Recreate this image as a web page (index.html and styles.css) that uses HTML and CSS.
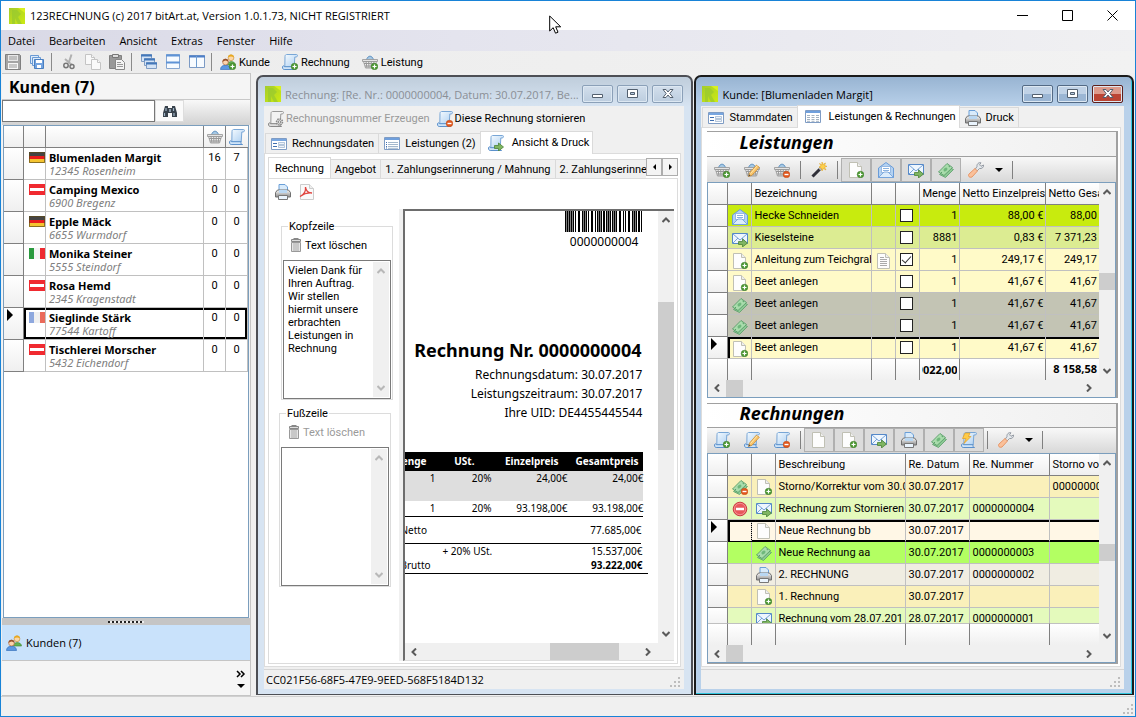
FILE: index.html
```html
<!DOCTYPE html>
<html lang="de">
<head>
<meta charset="utf-8">
<title>123RECHNUNG</title>
<link rel="stylesheet" href="styles.css">
</head>
<body>
<svg class="defs" aria-hidden="true">
<defs>
<linearGradient id="gl" x1="0" y1="0" x2="1" y2="1"><stop offset="0" stop-color="#a4cc2c"/><stop offset="1" stop-color="#cdea12"/></linearGradient>
<linearGradient id="gs" x1="0" y1="0" x2="1" y2="1"><stop offset="0" stop-color="#f4faff"/><stop offset="1" stop-color="#a9cdf0"/></linearGradient>
<linearGradient id="gp" x1="0" y1="0" x2="0" y2="1"><stop offset="0" stop-color="#f8f8f8"/><stop offset="1" stop-color="#8e8e8e"/></linearGradient>
</defs>
<symbol id="logo" viewBox="0 0 16 16"><path d="M0 0h16v16H0z" fill="url(#gl)"/><path d="M3 2h5l4 4-3 3 4 7H9L6 10v6H3z" fill="#97c92f" opacity=".7"/><path d="M9 0h7v5z" fill="#d8f020"/></symbol>
<symbol id="save" viewBox="0 0 16 16"><path d="M.5.5h14l1 1v14H.5z" fill="#a4a4a4" stroke="#808080"/><path d="M3 1h10v6H3z" fill="#e8e8e8"/><path d="M3 9h10v6H3z" fill="#f6f6f6"/><path d="M4 3h8M4 5h8M4 11h8M4 13h8" stroke="#999"/></symbol>
<symbol id="saveall" viewBox="0 0 16 16"><g fill="#dcebfa" stroke="#6a9ad4"><path d="M1.500 1.500h8v8h-8z"/><path d="M3.500 3.500h8v8h-8z"/><path d="M5.500 5.500h9v9h-9z" fill="#74a4e0" stroke="#4a7fc0"/></g><path d="M7 6h6v3H7zM8 11h4v3H8z" fill="#fff"/></symbol>
<symbol id="cut" viewBox="0 0 16 16"><path d="M10.500.500l-3 9M4 5l7 6" stroke="#b0b0b0" stroke-width="2"/><circle cx="5" cy="11.500" r="2.200" fill="none" stroke="#777" stroke-width="1.500"/><circle cx="11" cy="12.500" r="2" fill="none" stroke="#777" stroke-width="1.500"/></symbol>
<symbol id="copy" viewBox="0 0 16 16"><g fill="#f9f9f9" stroke="#c4c4c4"><path d="M.5.500h6l3 3v7h-9z"/><path d="M6.500 5.500h6l3 3v7h-9z"/><path d="M6.500.500v3h3M12.500 5.500v3h3"/></g></symbol>
<symbol id="paste" viewBox="0 0 16 16"><path d="M.5 1.500h12v13H.5z" fill="#999" stroke="#808080"/><path d="M3.500.500h6v3h-6z" fill="#ddd" stroke="#777"/><path d="M6.500 5.500h6l3 3v7h-9z" fill="#f4f4f4" stroke="#888"/><path d="M8 8.500h4M8 10.500h6M8 12.500h6" stroke="#999"/></symbol>
<symbol id="cascade" viewBox="0 0 16 16"><g fill="#d5e4f6" stroke="#7f9cc4"><path d="M.5.500h10v7H.5z"/><path d="M3.500 4.500h10v7h-10z"/><path d="M5.500 8.500h10v6h-10z"/></g><path d="M0 1.500h11M3 5.500h11M5 9.500h11" stroke="#4478ba" stroke-width="2"/></symbol>
<symbol id="tileh" viewBox="0 0 16 16"><path d="M1.500.500h13v14h-13z" fill="#f7fbff" stroke="#86a6d0"/><path d="M1 1.500h14M1 8.500h14" stroke="#5f93d6" stroke-width="2"/></symbol>
<symbol id="tilev" viewBox="0 0 16 16"><path d="M.5 1.500h15v12H.5z" fill="#f7fbff" stroke="#7c9ac4"/><path d="M0 2.500h16" stroke="#4d7fc8" stroke-width="2"/><path d="M7.500 2v12" stroke="#6f9dd0"/></symbol>
<symbol id="plus" viewBox="0 0 16 16"><circle cx="12.500" cy="12.500" r="3.300" fill="#4f9a36" stroke="#3a7a24" stroke-width=".5"/><path d="M10.500 12.500h4M12.500 10.500v4" stroke="#fff" stroke-width="1.200"/></symbol>
<symbol id="minus" viewBox="0 0 16 16"><circle cx="12.500" cy="12.500" r="3.300" fill="#e2571e" stroke="#c24a10" stroke-width=".5"/><path d="M10.500 12.500h4" stroke="#fff" stroke-width="1.400"/></symbol>
<symbol id="pencil" viewBox="0 0 16 16"><path d="M4.500 14.500l1-3.500 7-8 2.800 2.300-7.300 8z" fill="#f9c46a" stroke="#c8862a" stroke-width=".7"/><path d="M6.500 11.500l7-8" stroke="#ffe9b0"/><path d="M4.500 14.500l.5-2 1.500 1z" fill="#444"/></symbol>
<symbol id="arrow" viewBox="0 0 16 16"><path d="M6.500 10.500h4V8l5 4-5 4v-2.500h-4z" fill="#7fb562" stroke="#4a8436" stroke-width=".8"/></symbol>
<symbol id="users" viewBox="0 0 16 16"><path d="M7 11c0-4 8-5 8.500 0z" fill="#65b152" stroke="#3a8330" stroke-width=".6"/><circle cx="11" cy="3.800" r="2.900" fill="#fcd7a6" stroke="#c48a2e" stroke-width=".6"/><path d="M8 3.500C8-.5 14-.5 14 3.500 12 2 10 2 8 3.500z" fill="#e8a91f"/><path d="M.5 15.500c0-6 10-6 10 0z" fill="#5b97e2" stroke="#2a66b4" stroke-width=".6"/><circle cx="5.500" cy="8" r="2.900" fill="#fcd3ac" stroke="#a9643a" stroke-width=".6"/><path d="M2.400 8c0-4.500 6.200-4.500 6.200 0-2-2-4-2-6.200 0z" fill="#96512a"/></symbol>
<symbol id="users-plus" viewBox="0 0 16 16"><use href="#users"/><use href="#plus"/></symbol>
<symbol id="scroll" viewBox="0 0 16 16"><path d="M3 2.500C3 .5 4.500.5 4.500.5h10c1.500 0 1.300 2.500-.5 2.500h-1.200l-.6 10H2.800z" fill="url(#gs)" stroke="#78a6d6"/><path d="M.5 13c0-1.500 2-1.500 2-.3h9.500c-.3 1.300.2 2.800 1.500 2.800H2.200C1 15.500.5 14.500.5 13z" fill="#cfe4f8" stroke="#5b90cb"/></symbol>
<symbol id="scroll-plus" viewBox="0 0 16 16"><use href="#scroll"/><use href="#plus"/></symbol>
<symbol id="scroll-minus" viewBox="0 0 16 16"><use href="#scroll"/><use href="#minus"/></symbol>
<symbol id="scroll-edit" viewBox="0 0 16 16"><use href="#scroll"/><use href="#pencil"/></symbol>
<symbol id="scroll-arrow" viewBox="0 0 16 16"><use href="#scroll"/><use href="#arrow"/></symbol>
<symbol id="scroll-bolt" viewBox="0 0 16 16"><use href="#scroll"/><path d="M4 1h5L7.500 4.500H10l-7 7 2-5H1.500z" fill="#ffcb48" stroke="#e09c24" stroke-width=".7"/></symbol>
<symbol id="scroll-gear" viewBox="0 0 16 16"><path d="M3 2.500C3 .5 4.500.5 4.500.5h10c1.500 0 1.300 2.500-.5 2.500h-1.200l-.6 10H2.800z" fill="#f2f2f2" stroke="#999"/><path d="M.5 13c0-1.500 2-1.500 2-.3h9.500c-.3 1.300.2 2.800 1.500 2.800H2.200C1 15.500.5 14.500.5 13z" fill="#ddd" stroke="#888"/><circle cx="11.500" cy="11" r="3" fill="#ddd" stroke="#888" stroke-width="1.500" stroke-dasharray="1.500 .8"/><circle cx="11.500" cy="11" r="1.200" fill="#fff" stroke="#888"/></symbol>
<symbol id="basket" viewBox="0 0 16 16"><path d="M4 6L6 3q2-2 4 0l2 3" fill="#a5c8e4" stroke="#6a98c4"/><path d="M.5 5.500h15v2H.5z" fill="#e4e4e4" stroke="#949494" stroke-width=".8"/><path d="M1.500 7.500h13l-2 6.500h-9z" fill="#f0f0f0" stroke="#909090" stroke-width=".8"/><path d="M2 9.500h12M3 12h10" stroke="#989898"/><path d="M4 7.500l1 6.500M6.700 7.500L7 14M9.300 7.500L9 14M12 7.500L11 14" stroke="#989898"/></symbol>
<symbol id="basket-plus" viewBox="0 0 16 16"><use href="#basket"/><use href="#plus"/></symbol>
<symbol id="basket-minus" viewBox="0 0 16 16"><use href="#basket"/><use href="#minus"/></symbol>
<symbol id="basket-edit" viewBox="0 0 16 16"><use href="#basket"/><use href="#pencil"/></symbol>
<symbol id="binoc" viewBox="0 0 16 16"><path d="M3 3h3v2h4V3h3l2 7v4h-5v-4H6v4H1v-4z" fill="#38424c"/><path d="M4 5v3M11.500 5v3M2.500 10v3M12 10v3" stroke="#9fb4c6" stroke-width="1.200"/><path d="M7 6h2v3H7z" fill="#8c9aa8"/></symbol>
<symbol id="form" viewBox="0 0 16 16"><path d="M.5 2.500h15v11H.5z" fill="#fff" stroke="#7f9cc4"/><path d="M1 3h14v2H1z" fill="#78a6e0"/><path d="M2 7.500h4M2 10.500h4" stroke="#3f6fb0"/><path d="M7.500 6.500h6v2h-6zM7.500 9.500h6v2h-6z" fill="#eef3fa" stroke="#9ab0cc" stroke-width=".7"/></symbol>
<symbol id="list" viewBox="0 0 16 16"><path d="M.5 1.500h15v12H.5z" fill="#fff" stroke="#7f9cc4"/><path d="M1 2h14v2H1z" fill="#6f9fdc"/><path d="M2 6.500h1M2 8.500h1M2 10.500h1M2 12h1" stroke="#3f6fb0"/><path d="M4 6.500h10M4 8.500h10M4 10.500h10M4 12.300h10" stroke="#9ab0c6" stroke-width=".9"/></symbol>
<symbol id="sheet" viewBox="0 0 16 16"><path d="M.5 1.500h15v12H.5z" fill="#fff" stroke="#7f9cc4"/><path d="M1 2h14v2H1z" fill="#6f9fdc"/><path d="M2 6.500h3M6.500 6.500h3M11 6.500h3M2 8.500h3M6.500 8.500h3M11 8.500h3M2 10.500h3M6.500 10.500h3M11 10.500h3M2 12.300h3M6.500 12.300h3M11 12.300h3" stroke="#a4b2c0"/></symbol>
<symbol id="printer" viewBox="0 0 16 16"><path d="M4 7V.500h6L12.500 3v4z" fill="#d9ebfb" stroke="#6a9fd8"/><path d="M2.500 6h11l2 2.500V13H.5V8.500z" fill="url(#gp)" stroke="#707070"/><path d="M4 6h8v3H4z" fill="#b9d7f2"/><path d="M3.500 11.500h9v4h-9z" fill="#eaf4fd" stroke="#777"/></symbol>
<symbol id="pdf" viewBox="0 0 16 16"><path d="M1.500.500h9l4 4v11h-13z" fill="#fafafa" stroke="#ccc"/><path d="M10.500.500v4h4" fill="#eee" stroke="#ccc"/><path d="M1 12.500c3.500-1.500 6-5 5.500-9.500C7 7.500 9.500 9 13 9 9 8.500 4.500 10 1 12.500z" fill="none" stroke="#e04540" stroke-width="1.300"/></symbol>
<symbol id="trash" viewBox="0 0 16 16"><path d="M5.500 1.500h5M3.500 2.500h9v2h-9z" fill="#ddd" stroke="#888"/><path d="M3.500 5.500h9v9h-9z" fill="#e6e6e6" stroke="#999"/><path d="M6 6v8M8 6v8M10 6v8" stroke="#aaa"/></symbol>
<symbol id="page" viewBox="0 0 16 16"><path d="M1.500.500h8l4 4v11h-12z" fill="#fdfdfd" stroke="#c0c0b4"/><path d="M9.500.500v4h4" fill="#eee" stroke="#c0c0b4"/></symbol>
<symbol id="page-plus" viewBox="0 0 16 16"><use href="#page"/><use href="#plus"/></symbol>
<symbol id="page-text" viewBox="0 0 16 16"><use href="#page"/><path d="M4 4.500h4M4 6.500h7M4 8.500h7M4 10.500h7M4 12.500h7" stroke="#aaa"/></symbol>
<symbol id="mail-open" viewBox="0 0 16 16"><path d="M.5 6L8 .500 15.500 6v9.500H.5z" fill="#b4d2f2" stroke="#6a9cd8"/><path d="M3.500 4.500h9v6h-9z" fill="#fff" stroke="#7aa5d8" stroke-width=".7"/><path d="M5 6.500h6M5 8.500h6" stroke="#8ab2e0"/><path d="M.5 15.500L6 10h4l5.500 5.500z" fill="#dcecfb" stroke="#6a9cd8" stroke-width=".8"/></symbol>
<symbol id="mail-arrow" viewBox="0 0 16 16"><path d="M.5 2.500h15v10H.5z" fill="#eef6fe" stroke="#5588c8"/><path d="M1 3l7 6 7-6M1 12l5-5M15 12l-5-5" fill="none" stroke="#6a9ad4" stroke-width=".9"/><use href="#arrow"/></symbol>
<symbol id="money" viewBox="0 0 16 16"><path d="M1.500 12.500l8.500-8 5.500 3-8 8z" fill="#8cc894" stroke="#5aa06a" stroke-width=".8"/><path d="M.5 10L9 1.500l5.500 4-8.500 8z" fill="#a9dcac" stroke="#4f965f" stroke-width=".8"/><ellipse cx="7.500" cy="7.500" rx="2.200" ry="1.500" fill="#6fb87c" transform="rotate(-40 7.500 7.500)"/><path d="M3 10l1 1M10.500 4l1.500 1" stroke="#5aa06a"/></symbol>
<symbol id="money-minus" viewBox="0 0 16 16"><use href="#money"/><use href="#minus"/></symbol>
<symbol id="wrench" viewBox="0 0 16 16"><path d="M7 7.500l2-3C8.500 2 11 0 13 .800l-1.500 2 1.500 1.500 2.500-1.300c.5 2.500-2 4-4 3.500L9 9z" fill="#e4e8ec" stroke="#8b939c" stroke-width=".9"/><path d="M1 12l6-5.500L9.500 9 4 15C1.500 16-.5 14 1 12z" fill="#fac09a" stroke="#e8905c" stroke-width=".9"/></symbol>
<symbol id="wand" viewBox="0 0 16 16"><path d="M1.500 14.500l9-9" stroke="#2f2f38" stroke-width="3"/><path d="M8.500 7.500l2-2" stroke="#bbb" stroke-width="3"/><path d="M11 0l.8 2.500L14.500 1l-1 2.500 2.500.8-2.500 1L15 8l-2.700-1.500L11 9l-.3-2.500L8 5l2-1.200L8.500 1.500 11 3z" fill="#ffd04a" stroke="#e0a82a" stroke-width=".6"/></symbol>
<symbol id="stop" viewBox="0 0 16 16"><circle cx="8" cy="8" r="6.800" fill="#e9585c" stroke="#c93a42"/><circle cx="8" cy="8" r="5.700" fill="none" stroke="#f4a0a0" stroke-width=".8"/><path d="M4 8h8" stroke="#fff" stroke-width="2.500"/></symbol>
<symbol id="de" viewBox="0 0 16 11"><path d="M0 0h16v4H0z" fill="#444"/><path d="M0 4h16v3H0z" fill="#e81c1c"/><path d="M0 7h16v4H0z" fill="#f4c430"/><path d="M.5.500h15v10H.5z" fill="none" stroke="#5c4a1a" opacity=".7"/></symbol>
<symbol id="at" viewBox="0 0 16 11"><path d="M0 0h16v11H0z" fill="#f02a30"/><path d="M1 4h14v3H1z" fill="#fff"/></symbol>
<symbol id="it" viewBox="0 0 16 11"><path d="M0 0h5v11H0z" fill="#2a9a3e"/><path d="M5 0h6v11H5z" fill="#f4f4f4"/><path d="M11 0h5v11h-5z" fill="#ee2a30"/></symbol>
<symbol id="fr" viewBox="0 0 16 11"><path d="M0 0h5v11H0z" fill="#8ea8de"/><path d="M5 0h6v11H5z" fill="#f0f0f0"/><path d="M11 0h5v11h-5z" fill="#ea6a5a"/></symbol>
<symbol id="up" viewBox="0 0 8 8"><path d="M.500 6L4 2.500 7.500 6" fill="none" stroke="currentColor" stroke-width="2"/></symbol>
<symbol id="down" viewBox="0 0 8 8"><path d="M.500 2L4 5.500 7.500 2" fill="none" stroke="currentColor" stroke-width="2"/></symbol>
<symbol id="left" viewBox="0 0 8 8"><path d="M6 .500L2.500 4 6 7.500" fill="none" stroke="currentColor" stroke-width="2"/></symbol>
<symbol id="right" viewBox="0 0 8 8"><path d="M2 .500L5.500 4 2 7.500" fill="none" stroke="currentColor" stroke-width="2"/></symbol>
<symbol id="wmin" viewBox="0 0 12 12"><path d="M.500 6.500h10v3h-10z" fill="#fff" stroke="#53606f"/></symbol>
<symbol id="wmax" viewBox="0 0 12 12"><path d="M.500 1.500h10v8h-10z" fill="#fff" stroke="#53606f"/><path d="M3.500 4.500h4v2h-4z" fill="#b8cbe0" stroke="#53606f"/></symbol>
<symbol id="wclose" viewBox="0 0 12 12"><path d="M1 1.500h3L6 4l2-2.500h3L7.800 5.500 11 9.500H8L6 7 4 9.500H1l3.200-4z" fill="#fff" stroke="#53606f"/></symbol>
<symbol id="grip" viewBox="0 0 12 12"><path d="M8 0h2v2H8zM8 4h2v2H8zM8 8h2v2H8zM4 4h2v2H4zM4 8h2v2H4zM0 8h2v2H0z" fill="#bdbdbd"/></symbol>
</svg>

<div class="app">
  <header class="titlebar">
    <svg class="i"><use href="#logo"/></svg>
    <span class="apptitle">123RECHNUNG (c) 2017 bitArt.at, Version 1.0.1.73, NICHT REGISTRIERT</span>
    <button aria-label="Minimieren"><svg class="cap" viewBox="0 0 11 11"><path d="M0 5.500h11" stroke="#000"/></svg></button>
    <button aria-label="Maximieren"><svg class="cap" viewBox="0 0 11 11"><path d="M.5.500h10v10H.5z" fill="none" stroke="#000"/></svg></button>
    <button aria-label="Schließen"><svg class="cap" viewBox="0 0 11 11"><path d="M.5.500l10 10M10.500.500l-10 10" stroke="#000"/></svg></button>
  </header>
  <nav class="menubar"><button>Datei</button><button>Bearbeiten</button><button>Ansicht</button><button>Extras</button><button>Fenster</button><button>Hilfe</button></nav>
  <div class="toolbar">
    <button aria-label="Speichern"><svg class="i"><use href="#save"/></svg></button>
    <button aria-label="Alle speichern"><svg class="i"><use href="#saveall"/></svg></button>
    <span class="sep"></span>
    <button aria-label="Ausschneiden"><svg class="i"><use href="#cut"/></svg></button>
    <button aria-label="Kopieren"><svg class="i"><use href="#copy"/></svg></button>
    <button aria-label="Einfügen"><svg class="i"><use href="#paste"/></svg></button>
    <span class="sep"></span>
    <button aria-label="Überlappend"><svg class="i"><use href="#cascade"/></svg></button>
    <button aria-label="Untereinander"><svg class="i"><use href="#tileh"/></svg></button>
    <button aria-label="Nebeneinander"><svg class="i"><use href="#tilev"/></svg></button>
    <span class="sep"></span>
    <button class="txt"><svg class="i"><use href="#users-plus"/></svg>Kunde</button>
    <button class="txt"><svg class="i"><use href="#scroll-plus"/></svg>Rechnung</button>
    <button class="txt"><svg class="i"><use href="#basket-plus"/></svg>Leistung</button>
  </div>

  <div class="main">
    <aside class="side">
      <h1>Kunden (7)</h1>
      <div class="search"><input type="text" aria-label="Kunden suchen"><button aria-label="Suchen"><svg class="i"><use href="#binoc"/></svg></button></div>
      <div class="custbox">
        <table class="grid cust">
          <colgroup><col class="w20"><col class="w22"><col><col class="w22"><col class="w22"></colgroup>
          <thead><tr><th></th><th></th><th></th><th><svg class="i"><use href="#basket"/></svg></th><th><svg class="i"><use href="#scroll"/></svg></th></tr></thead>
          <tbody>
          <tr><td class="rh"></td><td class="flag"><svg><use href="#de"/></svg></td><td><b>Blumenladen Margit</b><i>12345 Rosenheim</i></td><td class="c">16</td><td class="c">7</td></tr>
          <tr><td class="rh"></td><td class="flag"><svg><use href="#at"/></svg></td><td><b>Camping Mexico</b><i>6900 Bregenz</i></td><td class="c">0</td><td class="c">0</td></tr>
          <tr><td class="rh"></td><td class="flag"><svg><use href="#de"/></svg></td><td><b>Epple Mäck</b><i>6655 Wurmdorf</i></td><td class="c">0</td><td class="c">0</td></tr>
          <tr><td class="rh"></td><td class="flag"><svg><use href="#it"/></svg></td><td><b>Monika Steiner</b><i>5555 Steindorf</i></td><td class="c">0</td><td class="c">0</td></tr>
          <tr><td class="rh"></td><td class="flag"><svg><use href="#at"/></svg></td><td><b>Rosa Hemd</b><i>2345 Kragenstadt</i></td><td class="c">0</td><td class="c">0</td></tr>
          <tr class="cur"><td class="rh"><span class="mark"></span></td><td class="flag"><svg><use href="#fr"/></svg></td><td><b>Sieglinde Stärk</b><i>77544 Kartoff</i></td><td class="c">0</td><td class="c">0</td></tr>
          <tr><td class="rh"></td><td class="flag"><svg><use href="#at"/></svg></td><td><b>Tischlerei Morscher</b><i>5432 Eichendorf</i></td><td class="c">0</td><td class="c">0</td></tr>
          </tbody>
        </table>
      </div>
      <div class="splitter"><span></span></div>
      <button class="navitem"><svg class="i"><use href="#users"/></svg>Kunden (7)</button>
      <div class="more"><button aria-label="Weitere Bereiche"><svg viewBox="0 0 10 20" class="moreicon"><path d="M1 1l3 3-3 3M5 1l3 3-3 3" fill="none" stroke="#000" stroke-width="1.500"/><path d="M1 14h8l-4 4z"/></svg></button></div>
    </aside>

    <section class="mdi">
      <article class="win passive">
        <header class="wbar"><svg class="i"><use href="#logo"/></svg><span class="wtitle">Rechnung: [Re. Nr.: 0000000004, Datum: 30.07.2017, Be...</span>
          <button aria-label="Minimieren"><svg><use href="#wmin"/></svg></button><button aria-label="Maximieren"><svg><use href="#wmax"/></svg></button><button aria-label="Schließen"><svg><use href="#wclose"/></svg></button></header>
        <div class="wbody">
          <div class="wtools"><button disabled><svg class="i"><use href="#scroll-gear"/></svg>Rechnungsnummer Erzeugen</button><button><svg class="i"><use href="#scroll-minus"/></svg>Diese Rechnung stornieren</button></div>
          <div class="tabs" role="tablist">
            <button role="tab"><svg class="i"><use href="#form"/></svg>Rechnungsdaten</button><button role="tab"><svg class="i"><use href="#list"/></svg>Leistungen (2)</button><button role="tab" class="on"><svg class="i"><use href="#scroll-arrow"/></svg>Ansicht &amp; Druck</button>
          </div>
          <div class="pane">
            <div class="subrow">
              <div class="tabs sub" role="tablist"><button role="tab" class="on">Rechnung</button><button role="tab">Angebot</button><button role="tab">1. Zahlungserinnerung / Mahnung</button><button role="tab" class="last">2. Zahlungserinne</button></div>
              <div class="spin"><button aria-label="Zurück"><span class="tl"></span></button><button aria-label="Weiter"><span class="tr"></span></button></div>
            </div>
            <div class="pane inner">
              <div class="docicons"><button aria-label="Drucken"><svg class="i"><use href="#printer"/></svg></button><button aria-label="PDF"><svg class="i"><use href="#pdf"/></svg></button></div>
              <div class="docrow">
                <div class="texts">
                  <fieldset class="kopf"><legend>Kopfzeile</legend><button><svg class="i"><use href="#trash"/></svg>Text löschen</button>
                    <div class="memo"><textarea aria-label="Kopfzeile">Vielen Dank für Ihren Auftrag. Wir stellen hiermit unsere erbrachten Leistungen in Rechnung</textarea><div class="vs off"><svg><use href="#up"/></svg><svg><use href="#down"/></svg></div></div></fieldset>
                  <fieldset><legend>Fußzeile</legend><button disabled><svg class="i"><use href="#trash"/></svg>Text löschen</button>
                    <div class="memo"><textarea aria-label="Fußzeile"></textarea><div class="vs off"><svg><use href="#up"/></svg><svg><use href="#down"/></svg></div></div></fieldset>
                </div>
                <div class="viewer">
                  <div class="vmain">
                    <div class="clip"><div class="paper">
                      <svg class="barcode" viewBox="0 0 78 21" preserveAspectRatio="none"><path d="M.5 0v21M4.500 0v21M8.500 0v21M10.500 0v21M17.500 0v21M21.500 0v21M23.500 0v21M30.500 0v21M32.500 0v21M36.500 0v21M41.500 0v21M45.500 0v21M47.500 0v21M51.500 0v21M58.500 0v21M60.500 0v21M67.500 0v21M71.500 0v21M76.500 0v21" stroke="#000"/><path d="M2.500 0v21M6.500 0v21M14 0v21M19.500 0v21M27 0v21M34.500 0v21M39 0v21M43.500 0v21M49.500 0v21M55 0v21M64 0v21M69.500 0v21M74 0v21" stroke="#000" stroke-width="2"/></svg>
                      <div class="bcnum">0000000004</div>
                      <h2>Rechnung Nr. 0000000004</h2>
                      <p>Rechnungsdatum: 30.07.2017</p><p>Leistungszeitraum: 30.07.2017</p><p>Ihre UID: DE4455445544</p>
                      <table class="inv">
                        <colgroup><col><col class="w56"><col class="w76"><col class="w76"></colgroup>
                        <thead><tr><th class="first">Menge</th><th>USt.</th><th>Einzelpreis</th><th>Gesamtpreis</th></tr></thead>
                        <tbody><tr class="gray"><td>1</td><td>20%</td><td>24,00€</td><td>24,00€</td></tr><tr class="line"><td>1</td><td>20%</td><td>93.198,00€</td><td>93.198,00€</td></tr></tbody>
                      </table>
                      <div class="sum net"><span class="s1">Netto</span><span>77.685,00€</span></div>
                      <div class="sum tax"><span class="s2">+ 20% USt.</span><span>15.537,00€</span></div>
                      <div class="sum gross"><span class="s1">Brutto</span><b>93.222,00€</b></div>
                    </div></div>
                    <div class="vs doc"><svg><use href="#up"/></svg><span class="thumb"></span><svg><use href="#down"/></svg></div>
                  </div>
                  <div class="hs doc"><svg><use href="#left"/></svg><span class="thumb"></span><svg><use href="#right"/></svg></div>
                </div>
              </div>
            </div>
          </div>
          <footer class="wstatus">CC021F56-68F5-47E9-9EED-568F5184D132<svg class="grip"><use href="#grip"/></svg></footer>
        </div>
      </article>

      <article class="win active">
        <header class="wbar"><svg class="i"><use href="#logo"/></svg><span class="wtitle">Kunde: [Blumenladen Margit]</span>
          <button aria-label="Minimieren"><svg><use href="#wmin"/></svg></button><button aria-label="Maximieren"><svg><use href="#wmax"/></svg></button><button class="red" aria-label="Schließen"><svg><use href="#wclose"/></svg></button></header>
        <div class="wbody">
          <div class="tabs" role="tablist">
            <button role="tab"><svg class="i"><use href="#form"/></svg>Stammdaten</button><button role="tab" class="on"><svg class="i"><use href="#sheet"/></svg>Leistungen &amp; Rechnungen</button><button role="tab"><svg class="i"><use href="#printer"/></svg>Druck</button>
          </div>
          <div class="pane lists">
            <section class="block">
              <h2>Leistungen</h2>
              <div class="gtools">
                <button aria-label="Neu"><svg class="i"><use href="#basket-plus"/></svg></button><button aria-label="Bearbeiten"><svg class="i"><use href="#basket-edit"/></svg></button><button aria-label="Löschen"><svg class="i"><use href="#basket-minus"/></svg></button><span class="sep"></span><button aria-label="Assistent"><svg class="i"><use href="#wand"/></svg></button><span class="sep"></span>
                <button class="tg" aria-label="Filter neu"><svg class="i"><use href="#page-plus"/></svg></button><button class="tg" aria-label="Filter geöffnet"><svg class="i"><use href="#mail-open"/></svg></button><button class="tg" aria-label="Filter gesendet"><svg class="i"><use href="#mail-arrow"/></svg></button><button class="tg" aria-label="Filter bezahlt"><svg class="i"><use href="#money"/></svg></button>
                <button class="drop" aria-label="Werkzeuge"><svg class="i"><use href="#wrench"/></svg><span class="tri"></span></button><span class="sep"></span>
              </div>
              <div class="gbox">
                <div class="gmain"><div class="gtable">
                  <div class="gscroll"><table class="grid">
                    <colgroup><col class="w20"><col class="w24"><col class="w120"><col class="w24"><col class="w24"><col class="w40"><col class="w86"><col></colgroup>
                    <thead><tr><th></th><th></th><th>Bezeichnung</th><th></th><th></th><th>Menge</th><th>Netto Einzelpreis</th><th>Netto Gesa</th></tr></thead>
                    <tbody>
                    <tr class="lime"><td class="rh"></td><td class="ic"><svg class="i"><use href="#mail-open"/></svg></td><td>Hecke Schneiden</td><td></td><td class="ic"><input type="checkbox" aria-label="Hecke Schneiden"></td><td class="r">1</td><td class="r">88,00 €</td><td class="r">88,00</td></tr>
                    <tr class="pale"><td class="rh"></td><td class="ic"><svg class="i"><use href="#mail-arrow"/></svg></td><td>Kieselsteine</td><td></td><td class="ic"><input type="checkbox" aria-label="Kieselsteine"></td><td class="r">8881</td><td class="r">0,83 €</td><td class="r">7 371,23</td></tr>
                    <tr class="cream"><td class="rh"></td><td class="ic"><svg class="i"><use href="#page-plus"/></svg></td><td>Anleitung zum Teichgrab</td><td class="ic"><svg class="i"><use href="#page-text"/></svg></td><td class="ic"><input type="checkbox" checked aria-label="Anleitung"></td><td class="r">1</td><td class="r">249,17 €</td><td class="r">249,17</td></tr>
                    <tr class="cream"><td class="rh"></td><td class="ic"><svg class="i"><use href="#page-plus"/></svg></td><td>Beet anlegen</td><td></td><td class="ic"><input type="checkbox" aria-label="Beet anlegen"></td><td class="r">1</td><td class="r">41,67 €</td><td class="r">41,67</td></tr>
                    <tr class="dim"><td class="rh"></td><td class="ic"><svg class="i"><use href="#money"/></svg></td><td>Beet anlegen</td><td></td><td class="ic"><input type="checkbox" aria-label="Beet anlegen"></td><td class="r">1</td><td class="r">41,67 €</td><td class="r">41,67</td></tr>
                    <tr class="dim"><td class="rh"></td><td class="ic"><svg class="i"><use href="#money"/></svg></td><td>Beet anlegen</td><td></td><td class="ic"><input type="checkbox" aria-label="Beet anlegen"></td><td class="r">1</td><td class="r">41,67 €</td><td class="r">41,67</td></tr>
                    <tr class="cream cur"><td class="rh"><span class="mark"></span></td><td class="ic"><svg class="i"><use href="#page-plus"/></svg></td><td>Beet anlegen</td><td></td><td class="ic"><input type="checkbox" aria-label="Beet anlegen"></td><td class="r">1</td><td class="r">41,67 €</td><td class="r">41,67</td></tr>
                    </tbody>
                  </table></div>
                  <table class="grid foot">
                    <colgroup><col class="w20"><col class="w24"><col class="w120"><col class="w24"><col class="w24"><col class="w40"><col class="w86"><col></colgroup>
                    <tbody><tr><td></td><td></td><td></td><td></td><td></td><td><div class="cut">9022,00</div></td><td></td><td class="r"><b>8 158,58</b></td></tr></tbody>
                  </table>
                </div>
                <div class="vs grid1"><svg><use href="#up"/></svg><span class="thumb"></span><svg><use href="#down"/></svg></div></div>
                <div class="hs"><svg><use href="#left"/></svg><span class="thumb"></span><svg><use href="#right"/></svg></div>
              </div>
            </section>
            <section class="block second">
              <h2>Rechnungen</h2>
              <div class="gtools">
                <button aria-label="Neu"><svg class="i"><use href="#scroll-plus"/></svg></button><button aria-label="Bearbeiten"><svg class="i"><use href="#scroll-edit"/></svg></button><button aria-label="Löschen"><svg class="i"><use href="#scroll-minus"/></svg></button><span class="sep"></span>
                <button class="tg" aria-label="Filter leer"><svg class="i"><use href="#page"/></svg></button><button class="tg" aria-label="Filter neu"><svg class="i"><use href="#page-plus"/></svg></button><button class="tg" aria-label="Filter gesendet"><svg class="i"><use href="#mail-arrow"/></svg></button><button class="tg" aria-label="Filter gedruckt"><svg class="i"><use href="#printer"/></svg></button><button class="tg" aria-label="Filter bezahlt"><svg class="i"><use href="#money"/></svg></button><button class="tg" aria-label="Filter storniert"><svg class="i"><use href="#scroll-bolt"/></svg></button><span class="sep"></span>
                <button class="drop" aria-label="Werkzeuge"><svg class="i"><use href="#wrench"/></svg><span class="tri"></span></button><span class="sep"></span>
              </div>
              <div class="gbox">
                <div class="gmain"><div class="gtable">
                  <div class="gscroll"><table class="grid">
                    <colgroup><col class="w20"><col class="w24"><col class="w24"><col class="w130"><col class="w64"><col class="w80"><col></colgroup>
                    <thead><tr><th></th><th></th><th></th><th>Beschreibung</th><th>Re. Datum</th><th>Re. Nummer</th><th>Storno vo</th></tr></thead>
                    <tbody>
                    <tr class="sand"><td class="rh"></td><td class="ic"><svg class="i"><use href="#money-minus"/></svg></td><td class="ic"><svg class="i"><use href="#page-plus"/></svg></td><td>Storno/Korrektur vom 30.0</td><td>30.07.2017</td><td></td><td>00000000</td></tr>
                    <tr class="mint"><td class="rh"></td><td class="ic"><svg class="i"><use href="#stop"/></svg></td><td class="ic"><svg class="i"><use href="#mail-arrow"/></svg></td><td>Rechnung zum Stornieren</td><td>30.07.2017</td><td>0000000004</td><td></td></tr>
                    <tr class="ivory cur both"><td class="rh"><span class="mark"></span></td><td class="focus"></td><td class="ic"><svg class="i"><use href="#page"/></svg></td><td>Neue Rechnung bb</td><td>30.07.2017</td><td></td><td></td></tr>
                    <tr class="green"><td class="rh"></td><td></td><td class="ic"><svg class="i"><use href="#money"/></svg></td><td>Neue Rechnung aa</td><td>30.07.2017</td><td>0000000003</td><td></td></tr>
                    <tr class="stone"><td class="rh"></td><td></td><td class="ic"><svg class="i"><use href="#printer"/></svg></td><td>2. RECHNUNG</td><td>30.07.2017</td><td>0000000002</td><td></td></tr>
                    <tr class="sand"><td class="rh"></td><td></td><td class="ic"><svg class="i"><use href="#page-plus"/></svg></td><td>1. Rechnung</td><td>30.07.2017</td><td></td><td></td></tr>
                    <tr class="mint"><td class="rh"></td><td></td><td class="ic"><svg class="i"><use href="#mail-arrow"/></svg></td><td>Rechnung vom 28.07.201</td><td>28.07.2017</td><td>0000000001</td><td></td></tr>
                    </tbody>
                  </table></div>
                  <table class="grid foot">
                    <colgroup><col class="w20"><col class="w24"><col class="w24"><col class="w130"><col class="w64"><col class="w80"><col></colgroup>
                    <tbody><tr><td></td><td></td><td></td><td></td><td></td><td></td><td></td></tr></tbody>
                  </table>
                </div>
                <div class="vs grid2"><svg><use href="#up"/></svg><span class="thumb"></span><svg><use href="#down"/></svg></div></div>
                <div class="hs"><svg><use href="#left"/></svg><span class="thumb"></span><svg><use href="#right"/></svg></div>
              </div>
            </section>
          </div>
          <footer class="wstatus"><svg class="grip"><use href="#grip"/></svg></footer>
        </div>
      </article>
    </section>
  </div>
  <footer class="status"><svg class="grip"><use href="#grip"/></svg></footer>
</div>
<svg class="pointer" viewBox="0 0 13 20"><path d="M.700 1v15l3.500-3.300 2.300 5.500 2.500-1-2.300-5.400h5z" fill="#fff" stroke="#000"/></svg>
</body>
</html>
```
FILE: styles.css
```css
* { box-sizing: border-box; }
body { margin: 0; font: 11px/13px Roboto, sans-serif; color: #000; }
button, input, textarea { font: inherit; color: inherit; margin: 0; padding: 0; border: 0; background: none; }
button { display: flex; align-items: center; white-space: nowrap; flex: none; }
h1, h2, p { margin: 0; }
h1, h2, b { font-family: "Noto Sans", sans-serif; }
.defs { position: absolute; width: 0; height: 0; }
.i { width: 16px; height: 16px; flex: none; display: block; }

.app { height: 100vh; display: flex; flex-direction: column; border: 1px solid #1883d7; background: #f0f0f0; }
.titlebar { height: 29px; flex: none; display: flex; align-items: center; background: #fff; padding-left: 8px; }
.apptitle { flex: 1; padding-left: 5px; font-family: "Open Sans", sans-serif; }
.titlebar button { width: 45px; height: 29px; justify-content: center; }
.cap { width: 11px; height: 11px; }
.menubar { height: 21px; flex: none; display: flex; align-items: center; gap: 14px; padding-left: 7px; background: linear-gradient(90deg, #d9d9e6, #e4e4ee 40%, #f0f0f2); font-family: "Open Sans", sans-serif; }
.toolbar { height: 22px; flex: none; display: flex; align-items: center; gap: 8px; padding-left: 4px; background: linear-gradient(90deg, #ececec, #f2f2f2); }
.toolbar .sep { width: 1px; height: 18px; background: #8a8a8a; margin: 0 1px 0 -2px; }
.toolbar .txt { gap: 3px; margin-right: 4px; }
.toolbar .sep + .txt { margin-left: -1px; }

.main { flex: 1; min-height: 0; display: flex; }
.side { width: 249px; flex: none; display: flex; flex-direction: column; margin-left: 1px; border: 1px solid #c5c5c5; border-left: 0; background: #f5f5f5; }
.side h1 { height: 26px; flex: none; font-size: 16px; line-height: 27px; padding-left: 7px; border-bottom: 1px solid #c8c8c8; }
.search { height: 25px; flex: none; display: flex; padding-bottom: 3px; background: linear-gradient(#f8f8f8, #d2d2d2); }
.search input { width: 153px; background: #fff; border: 1px solid #777; }
.search button { width: 29px; justify-content: center; background: #fafafa; border: 1px solid #ddd; }
.custbox { flex: 1; min-height: 0; margin: 0 1px; background: #fff; border: 1px solid #7b9ebd; }
.splitter { height: 7px; flex: none; background: #c5c5c5; display: flex; justify-content: center; align-items: center; }
.splitter span { width: 36px; height: 2px; background: repeating-linear-gradient(90deg, #222 0 2px, #eee 2px 4px); }
.navitem { height: 36px; gap: 4px; padding-left: 4px; background: #c9e2fb; border-bottom: 1px solid #c5c5c5; font-family: "Open Sans", sans-serif; }
.more { height: 34px; flex: none; display: flex; justify-content: flex-end; align-items: center; padding: 4px 4px 0 0; }
.moreicon { width: 10px; height: 20px; }

.grid { width: 100%; table-layout: fixed; border-collapse: separate; border-spacing: 0; }
.grid th, .grid td { height: 22px; padding: 0 2px; border-right: 1px solid #c0c0c0; border-bottom: 1px solid #c0c0c0; text-align: left; font-weight: normal; white-space: nowrap; overflow: hidden; }
.grid th, .grid .rh { background: linear-gradient(#fff, #efefef); border-color: #808080; }
.grid td:last-child, .grid th:last-child { border-right: 0; }
.grid .rh { padding: 0; vertical-align: top; }
.grid .ic { padding: 2px 3px 0 4px; }
.grid .ic .i { margin: auto; }
.grid .r { text-align: right; padding-right: 2px; }
.grid .c { text-align: center; }
.w20 { width: 20px; } .w22 { width: 22px; } .w24 { width: 24px; } .w40 { width: 40px; } .w56 { width: 56px; } .w64 { width: 64px; } .w76 { width: 76px; } .w80 { width: 80px; } .w86 { width: 86px; } .w120 { width: 120px; } .w130 { width: 130px; }
.mark { display: block; width: 0; height: 0; margin: 1px 0 0 3px; border: 6px solid transparent; border-left-color: #000; border-right: 0; }
.cust th { padding: 0 3px; }
.cust td { height: 32px; vertical-align: top; padding-top: 3px; }
.cust td:nth-child(3) { padding-left: 3px; }
.cust .flag { padding: 4px 0 0 5px; }
.flag svg { display: block; width: 16px; height: 11px; }
.cust b, .cust i { display: block; }
.cust i { color: #808080; font-family: "Noto Sans", sans-serif; }
.cust td:last-child { border-right: 1px solid #c0c0c0; }
.cust .cur td { box-shadow: inset 0 2px #000, inset 0 -2px #000; }
.cust .cur .rh { box-shadow: none; }
.cust .cur .flag { box-shadow: inset 2px 2px #000, inset 0 -2px #000; }
.cust .cur td:last-child { box-shadow: inset -2px 2px #000, inset 0 -2px #000; }

.mdi { flex: 1; min-width: 0; display: grid; grid-template-columns: 437fr 439fr; gap: 1px; margin: 2px 1px 1px 5px; }
.win { min-width: 0; min-height: 0; display: flex; flex-direction: column; border: 2px solid #4d4f55; border-bottom-width: 1px; border-radius: 7px 7px 0 0; padding: 0 7px 5px 6px; }
.passive { background: linear-gradient(#bfcddb, #d7e4f2 30px); }
.active { border-color: #1a1a1a; background: linear-gradient(#98b4d2, #b9d1ea 30px); box-shadow: inset -1px -1px #2fc5dd; padding-left: 5px; padding-right: 8px; }
.wbar { height: 29px; flex: none; display: flex; align-items: center; gap: 4px; font-family: "Open Sans", sans-serif; padding: 5px 1px 0; }
.passive .wbar { color: #8a8f96; }
.wtitle { flex: 1; min-width: 0; white-space: nowrap; }
.wbar button { width: 31px; height: 18px; justify-content: center; border: 1px solid #8ba0b8; border-radius: 2px; background: linear-gradient(#d3dfec, #bccddf); box-shadow: inset 0 0 0 1px #dde8f2; }
.active .wbar button { border-color: #536a85; background: linear-gradient(#c0d2e6 50%, #9bb6d4 50%); }
.active .wbar .red { border-color: #5e1f1c; background: linear-gradient(#dd9a8b 50%, #bb4433 50%); }
.wbar button svg { width: 12px; height: 12px; }
.wbody { flex: 1; min-height: 0; display: flex; flex-direction: column; background: #f0f0f0; }
.wtools { height: 25px; flex: none; display: flex; align-items: center; gap: 7px; padding: 0 4px; }
.wtools button { gap: 2px; }
button:disabled { color: #9a9a9a; }
.tabs { flex: none; display: flex; align-items: flex-end; padding-left: 2px; }
.tabs button { height: 20px; gap: 5px; padding: 0 4px 0 5px; border: 1px solid #dadada; border-bottom: 0; margin-left: -1px; }
.tabs .on { height: 23px; background: #fff; padding: 0 3px 1px 7px; gap: 8px; margin-bottom: -1px; z-index: 1; }
.pane { flex: 1; min-height: 0; display: flex; flex-direction: column; background: #fff; border: 1px solid #dcdcdc; }
.passive .wbody > .pane { margin-right: 3px; padding: 3px 2px 2px 3px; }
.subrow { display: flex; flex: none; align-items: flex-end; }
.sub { flex: 1; min-width: 0; overflow: hidden; padding-left: 1px; }
.sub button { background: #f0f0f0; height: 19px; padding: 0 4px; }
.sub .on { height: 21px; background: #fff; padding: 0 6px; margin-bottom: 0; }
.sub .last { padding-right: 0; }
.spin { display: flex; align-self: stretch; padding: 1px 0 2px; }
.spin button { width: 16px; justify-content: center; background: #f4f4f4; border: 1px solid #adadad; }
.tl, .tr { border: 3px solid transparent; }
.tl { border-right-color: #000; border-left: 0; }
.tr { border-left-color: #000; border-right: 0; }
.inner { padding: 0 3px 2px 6px; }
.docicons { height: 30px; flex: none; display: flex; align-items: flex-start; padding-top: 5px; gap: 8px; }
.docrow { flex: 1; min-height: 0; display: flex; }
.texts { width: 128px; flex: none; display: flex; flex-direction: column; gap: 7px; padding: 11px 0 0 4px; border-right: 4px solid #f0f0f0; }
fieldset { width: 112px; min-width: 0; margin: 0; padding: 4px 1px 0; border: 1px solid #dcdcdc; }
.kopf { margin-left: 2px; }
legend { padding: 0 1px; margin-left: 5px; }
fieldset button { gap: 1px; padding-left: 5px; }
.memo { height: 139px; margin-top: 7px; display: flex; border: 1px solid #7a7a7a; padding: 1px; }
.memo textarea { flex: 1; min-width: 0; padding: 2px 3px; resize: none; overflow: hidden; outline: 0; }
.viewer { flex: 1; min-width: 0; display: flex; flex-direction: column; border-top: 2px solid #6d6d6d; border-left: 2px solid #6d6d6d; border-bottom: 1px solid #ddd; }
.vmain { flex: 1; min-height: 0; display: flex; }
.clip { flex: 1; min-width: 0; display: flex; justify-content: flex-end; overflow: hidden; }
.paper { width: 270px; flex: none; font-family: "Noto Sans", sans-serif; text-align: right; padding-right: 15px; }
.barcode { width: 78px; height: 21px; display: block; margin: 0 0 0 auto; }
.bcnum { line-height: 20px; padding-right: 5px; font-size: 12px; }
.paper h2 { font-size: 18px; line-height: 24px; margin-top: 86px; padding-right: 2px; }
.paper p { font-size: 12px; line-height: 19px; padding-right: 1px; }
.paper p:first-of-type { margin-top: 3px; }
.inv { width: 255px; margin-top: 30px; border-spacing: 0; table-layout: fixed; font-size: 10px; }
.inv th { height: 19px; padding: 0 5px 0 0; background: #000; color: #fff; text-align: right; }
.inv th:nth-child(2) { padding-right: 17px; }
.inv th:nth-child(3), .inv .first { padding-right: 9px; }
.inv td { padding: 0; vertical-align: middle; }
.inv .gray td { height: 30px; padding-top: 1px; background: #dedede; vertical-align: top; }
.inv .line td { height: 16px; border-bottom: 1px solid #000; }
.sum { display: flex; justify-content: space-between; font-size: 10px; padding-right: 1px; text-align: left; }
.s1 { padding-left: 12px; }
.s2 { padding-left: 54px; }
.net { height: 27px; align-items: center; margin-right: 2px; padding-right: 0; border-bottom: 1px solid #000; }
.tax { height: 14px; align-items: center; }
.gross { height: 16px; align-items: center; margin-right: -5px; padding-right: 6px; border-bottom: 1px solid #000; }

.vs { width: 16px; flex: none; display: flex; flex-direction: column; align-items: center; padding: 5px 0; background: #f0f0f0; color: #5a5a5a; }
.vs svg, .hs svg { width: 8px; height: 8px; flex: none; }
.vs svg:last-child, .hs svg:last-child { margin-top: auto; }
.off { justify-content: space-between; color: #b8b8b8; }
.thumb { background: #cdcdcd; }
.vs .thumb { width: 100%; }
.hs { height: 17px; flex: none; display: flex; align-items: center; padding: 0 22px 0 5px; background: #f0f0f0; color: #5a5a5a; }
.hs .thumb { width: 17px; height: 100%; margin-left: 5px; }
.hs svg:last-child { margin: 0 0 0 auto; }
.vs.doc .thumb { height: 35%; margin-top: 78px; }
.hs.doc .thumb { width: 69px; margin-left: auto; }
.hs.doc svg:last-child { margin-left: 25px; }
.vs.grid1 .thumb, .vs.grid2 .thumb { height: 17px; margin-top: 77px; }

.wstatus { height: 20px; flex: none; display: flex; align-items: center; justify-content: space-between; margin-top: 2px; padding: 0 2px; border-top: 1px solid #d5d5d5; font-family: "Open Sans", sans-serif; }
.grip { width: 12px; height: 12px; margin-left: auto; align-self: flex-end; flex: none; }
.status { height: 20px; flex: none; display: flex; border-top: 1px solid #d0d0d0; }

.active .tabs { margin-top: -1px; }
.lists { padding: 3px 2px 2px 5px; margin-right: 3px; }
.block { display: flex; flex-direction: column; flex: 267 1 0; min-height: 0; border-right: 2px solid #a0a0a0; }
.second { flex-grow: 261; margin-top: 5px; border-bottom: 1px solid #a0a0a0; }
.block h2 { height: 26px; flex: none; font-size: 18px; line-height: 20px; font-style: italic; padding-left: 32px; border-top: 1px solid #a0a0a0; border-bottom: 1px solid #a0a0a0; background: linear-gradient(90deg, #fff, #f0f0f0); }
.second h2 { height: 25px; line-height: 19px; }
.gtools { height: 25px; flex: none; display: flex; align-items: center; background: linear-gradient(#f8f8f8, #d8d8d8); }
.gtools button { width: 30px; height: 24px; justify-content: center; }
.gtools .sep { width: 1px; height: 18px; background: #808080; margin: 0 3px; }
.gtools .tg { border: 1px solid #b0b0b0; background: #dcdcdc; }
.gtools .drop { width: 48px; gap: 11px; }
.tri { border: 4px solid transparent; border-top-color: #000; border-bottom: 0; }
.gbox { flex: 1; min-height: 0; display: flex; flex-direction: column; border: 1px solid #7b9ebd; }
.gmain { flex: 1; min-height: 0; display: flex; }
.gtable { flex: 1; min-width: 0; display: flex; flex-direction: column; background: #fff; }
.gscroll { flex: 1; min-height: 0; overflow: hidden; }
.foot { flex: none; }
.foot td { border-color: #808080; border-bottom: 0; background: linear-gradient(#fff, #f0f0f0); border-top: 1px solid #c0c0c0; }
.cut { display: flex; justify-content: flex-end; overflow: hidden; white-space: nowrap; font-weight: bold; font-family: "Noto Sans", sans-serif; }
.grid input { appearance: none; display: block; width: 13px; height: 13px; margin: 0 auto 2px 0; background: #fff; border: 1px solid #222; }
.grid input:checked { position: relative; }
.grid input:checked::after { content: ""; position: absolute; left: 3px; top: 0; width: 4px; height: 8px; border: solid #333; border-width: 0 1px 1px 0; transform: rotate(42deg); }
.lime td { background: #c8eb0e; }
.pale td { background: #dcec92; }
.cream td { background: #fffac8; }
.dim td { background: #c3c4b4; }
.sand td { background: #faf0ba; }
.mint td { background: #e4fabc; }
.ivory td { background: #fff7e6; }
.green td { background: #b3ff62; }
.stone td { background: #f0ede2; }
.gscroll .cur td { box-shadow: inset 0 2px #000; }
.gscroll .cur.both td { box-shadow: inset 0 2px #000, inset 0 -1px #000; border-bottom-color: #000; }
.gscroll .cur .rh, .gscroll .cur.both .rh { box-shadow: none; border-bottom-color: #808080; }
.gscroll .cur td:nth-child(2) { box-shadow: inset 2px 2px #000; }
.gscroll .both .focus { outline: 1px dotted #000; outline-offset: -1px; }
.pointer { position: fixed; left: 549px; top: 15px; width: 13px; height: 20px; }
```
